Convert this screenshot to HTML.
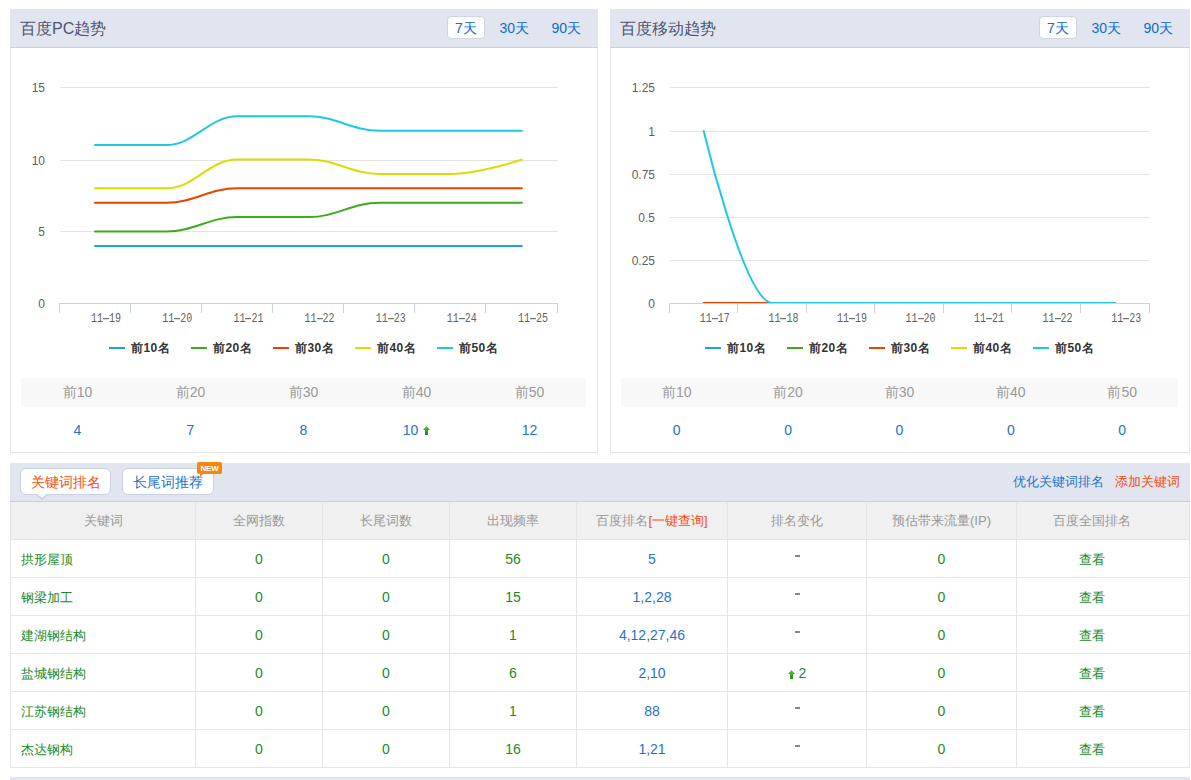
<!DOCTYPE html>
<html><head><meta charset="utf-8">
<style>
*{margin:0;padding:0;box-sizing:border-box}
html,body{width:1191px;height:780px;overflow:hidden;background:#fff}
body{position:relative;font-family:"Liberation Sans",sans-serif;color:#333}
.panel{position:absolute;top:9px;height:444px;border:1px solid #e5e5e5;background:#fff}
.ph{position:absolute;left:-1px;right:-1px;top:-1px;height:39px;background:#e1e5ef;border-bottom:1px solid #c9d1e1}
.pt{position:absolute;left:10px;top:10px;font-size:16px;color:#4b5570;line-height:20px}
.tabs{position:absolute;top:7px;right:0;width:160px;height:23px;font-size:14px}
.tabs span{position:absolute;top:0;height:23px;line-height:24px;color:#0b6dd0;white-space:nowrap}
.tabs span.on{background:#fff;border:1px solid #cdd5e3;border-radius:4px;width:38px;text-align:center;line-height:22px}
svg.ch{position:absolute;left:0;top:0}
.yl{position:absolute;width:40px;text-align:right;font-size:12px;line-height:16px;color:#606060}
.xl{position:absolute;width:50px;text-align:center;font-family:"Liberation Mono",monospace;font-size:10px;line-height:12px;color:#606060;transform:scaleY(1.2);transform-origin:0 0}
.xl i{display:inline-block;width:6px;height:1px;background:#707070;vertical-align:middle;position:relative;top:0px}
.lg{position:absolute;top:339px;height:18px;line-height:18px;font-size:12px;font-weight:bold;color:#333;white-space:nowrap}
.lg i{display:inline-block;width:16px;height:2px;vertical-align:middle;margin-right:6px;position:relative;top:-1px}
.lg b{letter-spacing:0.4px}
.band{position:absolute;top:378px;height:29px;background:#f8f8f8;display:flex}
.sh{text-align:center;font-size:14px;line-height:29px;color:#999}
.vals{position:absolute;top:415px;height:30px;display:flex}
.sv{text-align:center;font-size:14px;line-height:30px;color:#1e73c8}
.arr{display:inline-block;vertical-align:middle;margin-left:5px;position:relative;top:-1px}
.bh{position:absolute;left:10px;top:463px;width:1180px;height:39px;background:#e1e5ef;border-bottom:1px solid #c9d1e1}
.btab{position:absolute;top:5px;height:27px;border:1px solid #c9d1e1;border-radius:6px;background:#fff;font-size:14px;line-height:25px;padding-top:1px;text-align:center}
.red{color:#fa4c0f}
.blue{color:#1e73c8}
.links{position:absolute;right:10px;top:9px;font-size:13px;line-height:20px}
.tblbg{position:absolute;left:10px;top:502px;width:1180px;height:38px;background:#f0f0f0}
.th{position:absolute;height:37px;line-height:37px;text-align:center;font-size:13px;color:#999;white-space:nowrap}
.td{position:absolute;height:37px;line-height:37px;padding-top:1px;text-align:center;font-size:13px;color:#1a8a28;white-space:nowrap}
.td.kw{text-align:left;padding-left:10px}
.td.num{font-size:14px}
.td.blue{color:#1e73c8}
.dash{display:inline-block;width:5px;height:2px;background:#888;vertical-align:top;margin-top:14px}
.hl{position:absolute;left:10px;width:1180px;height:1px;background:#e5e5e5}
.vl{position:absolute;top:502px;height:266px;width:1px;background:#e5e5e5}
.tl{position:absolute;left:10px;top:502px;height:266px;width:1px;background:#e5e5e5}
.tr{position:absolute;left:1189px;top:502px;height:266px;width:1px;background:#e5e5e5}
.foot{position:absolute;left:10px;top:777px;width:1180px;height:3px;background:#e1e5ef}
.newb{position:absolute;left:197px;top:462px;width:25px;height:12px;background:#f8850c;border-radius:2px;color:#fff;font-size:8px;font-weight:bold;line-height:13px;letter-spacing:-0.2px;text-align:center}
.newb:after{content:"";position:absolute;left:3px;bottom:-3px;border-left:3px solid #f8850c;border-bottom:3px solid transparent}
.ptr{position:absolute;left:36px;top:495px;width:0;height:0;border-left:6px solid transparent;border-right:6px solid transparent;border-top:5px solid #c9d1e1}
.ptr:after{content:"";position:absolute;left:-5px;top:-6px;border-left:5px solid transparent;border-right:5px solid transparent;border-top:4px solid #f6f7fa}
</style></head><body>
<div class="panel" style="left:10px;width:588px"><div class="ph"><div class="pt">百度PC趋势</div><div class="tabs"><span class="on" style="right:113px">7天</span><span style="right:69px">30天</span><span style="right:17px">90天</span></div></div></div>
<div class="panel" style="left:610px;width:580px"><div class="ph"><div class="pt">百度移动趋势</div><div class="tabs"><span class="on" style="right:113px">7天</span><span style="right:69px">30天</span><span style="right:17px">90天</span></div></div></div>
<svg class="ch" width="1191" height="780" viewBox="0 0 1191 780">
<rect x="60" y="87" width="498" height="1" fill="#e3e3e3"/>
<rect x="60" y="160" width="498" height="1" fill="#e3e3e3"/>
<rect x="60" y="231" width="498" height="1" fill="#e3e3e3"/>
<path d="M94.97 245.90 C94.97 245.90 137.67 245.90 166.12 245.90 C194.58 245.90 208.81 245.90 237.27 245.90 C265.73 245.90 279.96 245.90 308.42 245.90 C336.88 245.90 351.11 245.90 379.57 245.90 C408.03 245.90 422.26 245.90 450.72 245.90 C479.18 245.90 521.87 245.90 521.87 245.90" fill="none" stroke="#21a1db" stroke-width="2" stroke-linejoin="round" stroke-linecap="round"/>
<path d="M94.97 231.50 C94.97 231.50 137.67 231.50 166.12 231.50 C194.58 231.50 208.81 217.10 237.27 217.10 C265.73 217.10 279.96 217.10 308.42 217.10 C336.88 217.10 351.11 202.70 379.57 202.70 C408.03 202.70 422.26 202.70 450.72 202.70 C479.18 202.70 521.87 202.70 521.87 202.70" fill="none" stroke="#3caa1b" stroke-width="2" stroke-linejoin="round" stroke-linecap="round"/>
<path d="M94.97 202.70 C94.97 202.70 137.67 202.70 166.12 202.70 C194.58 202.70 208.81 188.30 237.27 188.30 C265.73 188.30 279.96 188.30 308.42 188.30 C336.88 188.30 351.11 188.30 379.57 188.30 C408.03 188.30 422.26 188.30 450.72 188.30 C479.18 188.30 521.87 188.30 521.87 188.30" fill="none" stroke="#e84300" stroke-width="2" stroke-linejoin="round" stroke-linecap="round"/>
<path d="M94.97 188.30 C94.97 188.30 137.67 188.30 166.12 188.30 C194.58 188.30 208.81 159.50 237.27 159.50 C265.73 159.50 279.96 159.50 308.42 159.50 C336.88 159.50 351.11 173.90 379.57 173.90 C408.03 173.90 422.26 173.90 450.72 173.90 C479.18 173.90 521.87 159.50 521.87 159.50" fill="none" stroke="#dcdc00" stroke-width="2" stroke-linejoin="round" stroke-linecap="round"/>
<path d="M94.97 145.10 C94.97 145.10 137.67 145.10 166.12 145.10 C194.58 145.10 208.81 116.30 237.27 116.30 C265.73 116.30 279.96 116.30 308.42 116.30 C336.88 116.30 351.11 130.70 379.57 130.70 C408.03 130.70 422.26 130.70 450.72 130.70 C479.18 130.70 521.87 130.70 521.87 130.70" fill="none" stroke="#1ec8e4" stroke-width="2" stroke-linejoin="round" stroke-linecap="round"/>
<rect x="59" y="303" width="499" height="1" fill="#c7d3e8"/>
<rect x="59" y="303" width="1" height="10" fill="#c7d3e8"/>
<rect x="130" y="303" width="1" height="10" fill="#c7d3e8"/>
<rect x="201" y="303" width="1" height="10" fill="#c7d3e8"/>
<rect x="272" y="303" width="1" height="10" fill="#c7d3e8"/>
<rect x="343" y="303" width="1" height="10" fill="#c7d3e8"/>
<rect x="414" y="303" width="1" height="10" fill="#c7d3e8"/>
<rect x="485" y="303" width="1" height="10" fill="#c7d3e8"/>
<rect x="557" y="303" width="1" height="10" fill="#c7d3e8"/>
<rect x="670" y="87" width="480" height="1" fill="#e3e3e3"/>
<rect x="670" y="131" width="480" height="1" fill="#e3e3e3"/>
<rect x="670" y="174" width="480" height="1" fill="#e3e3e3"/>
<rect x="670" y="217" width="480" height="1" fill="#e3e3e3"/>
<rect x="670" y="260" width="480" height="1" fill="#e3e3e3"/>
<path d="M703.69 303.00 C703.69 303.00 744.83 303.00 772.26 303.00 C799.69 303.00 813.40 303.00 840.83 303.00 C868.26 303.00 881.97 303.00 909.40 303.00 C936.83 303.00 950.54 303.00 977.97 303.00 C1005.40 303.00 1019.11 303.00 1046.54 303.00 C1073.97 303.00 1115.11 303.00 1115.11 303.00" fill="none" stroke="#21a1db" stroke-width="2" stroke-linejoin="round" stroke-linecap="round"/>
<path d="M703.69 303.00 C703.69 303.00 744.83 303.00 772.26 303.00 C799.69 303.00 813.40 303.00 840.83 303.00 C868.26 303.00 881.97 303.00 909.40 303.00 C936.83 303.00 950.54 303.00 977.97 303.00 C1005.40 303.00 1019.11 303.00 1046.54 303.00 C1073.97 303.00 1115.11 303.00 1115.11 303.00" fill="none" stroke="#3caa1b" stroke-width="2" stroke-linejoin="round" stroke-linecap="round"/>
<path d="M703.69 303.00 C703.69 303.00 744.83 303.00 772.26 303.00 C799.69 303.00 813.40 303.00 840.83 303.00 C868.26 303.00 881.97 303.00 909.40 303.00 C936.83 303.00 950.54 303.00 977.97 303.00 C1005.40 303.00 1019.11 303.00 1046.54 303.00 C1073.97 303.00 1115.11 303.00 1115.11 303.00" fill="none" stroke="#e84300" stroke-width="2" stroke-linejoin="round" stroke-linecap="round"/>
<path d="M703.69 131.00 C703.69 131.00 744.83 303.00 772.26 303.00 C799.69 303.00 813.40 303.00 840.83 303.00 C868.26 303.00 881.97 303.00 909.40 303.00 C936.83 303.00 950.54 303.00 977.97 303.00 C1005.40 303.00 1019.11 303.00 1046.54 303.00 C1073.97 303.00 1115.11 303.00 1115.11 303.00" fill="none" stroke="#1ec8e4" stroke-width="2" stroke-linejoin="round" stroke-linecap="round"/>
<rect x="669" y="303" width="481" height="1" fill="#c7d3e8"/>
<rect x="669" y="303" width="1" height="10" fill="#c7d3e8"/>
<rect x="737" y="303" width="1" height="10" fill="#c7d3e8"/>
<rect x="806" y="303" width="1" height="10" fill="#c7d3e8"/>
<rect x="874" y="303" width="1" height="10" fill="#c7d3e8"/>
<rect x="943" y="303" width="1" height="10" fill="#c7d3e8"/>
<rect x="1011" y="303" width="1" height="10" fill="#c7d3e8"/>
<rect x="1080" y="303" width="1" height="10" fill="#c7d3e8"/>
<rect x="1149" y="303" width="1" height="10" fill="#c7d3e8"/>
</svg>
<div class="yl" style="left:5px;top:80px">15</div>
<div class="yl" style="left:5px;top:153px">10</div>
<div class="yl" style="left:5px;top:224px">5</div>
<div class="yl" style="left:5px;top:296px">0</div>
<div class="yl" style="left:615px;top:80px">1.25</div>
<div class="yl" style="left:615px;top:124px">1</div>
<div class="yl" style="left:615px;top:167px">0.75</div>
<div class="yl" style="left:615px;top:210px">0.5</div>
<div class="yl" style="left:615px;top:253px">0.25</div>
<div class="yl" style="left:615px;top:296px">0</div>
<div class="xl" style="left:81.1px;top:312px">11<i></i>19</div>
<div class="xl" style="left:152.2px;top:312px">11<i></i>20</div>
<div class="xl" style="left:223.4px;top:312px">11<i></i>21</div>
<div class="xl" style="left:294.5px;top:312px">11<i></i>22</div>
<div class="xl" style="left:365.7px;top:312px">11<i></i>23</div>
<div class="xl" style="left:436.8px;top:312px">11<i></i>24</div>
<div class="xl" style="left:508.0px;top:312px">11<i></i>25</div>
<div class="xl" style="left:689.8px;top:312px">11<i></i>17</div>
<div class="xl" style="left:758.4px;top:312px">11<i></i>18</div>
<div class="xl" style="left:826.9px;top:312px">11<i></i>19</div>
<div class="xl" style="left:895.5px;top:312px">11<i></i>20</div>
<div class="xl" style="left:964.1px;top:312px">11<i></i>21</div>
<div class="xl" style="left:1032.6px;top:312px">11<i></i>22</div>
<div class="xl" style="left:1101.2px;top:312px">11<i></i>23</div>
<div class="lg" style="left:109px"><i style="background:#21a1db"></i><b>前10名</b></div>
<div class="lg" style="left:191px"><i style="background:#3caa1b"></i><b>前20名</b></div>
<div class="lg" style="left:273px"><i style="background:#e84300"></i><b>前30名</b></div>
<div class="lg" style="left:355px"><i style="background:#dcdc00"></i><b>前40名</b></div>
<div class="lg" style="left:437px"><i style="background:#1ec8e4"></i><b>前50名</b></div>
<div class="lg" style="left:705px"><i style="background:#21a1db"></i><b>前10名</b></div>
<div class="lg" style="left:787px"><i style="background:#3caa1b"></i><b>前20名</b></div>
<div class="lg" style="left:869px"><i style="background:#e84300"></i><b>前30名</b></div>
<div class="lg" style="left:951px"><i style="background:#dcdc00"></i><b>前40名</b></div>
<div class="lg" style="left:1033px"><i style="background:#1ec8e4"></i><b>前50名</b></div>
<div class="band" style="left:21px;width:565px"><div class="sh" style="width:113.00px">前10</div><div class="sh" style="width:113.00px">前20</div><div class="sh" style="width:113.00px">前30</div><div class="sh" style="width:113.00px">前40</div><div class="sh" style="width:113.00px">前50</div></div><div class="vals" style="left:21px;width:565px"><div class="sv" style="width:113.00px">4</div><div class="sv" style="width:113.00px">7</div><div class="sv" style="width:113.00px">8</div><div class="sv" style="width:113.00px">10<svg class="arr" width="7" height="9" viewBox="0 0 7 9"><defs><linearGradient id="ag" x1="0" y1="0" x2="0" y2="1"><stop offset="0" stop-color="#5cc23a"/><stop offset="1" stop-color="#1e8a10"/></linearGradient></defs><path d="M3.5 0 L7 4 L5 4 L5 9 L2 9 L2 4 L0 4 Z" fill="url(#ag)"/></svg></div><div class="sv" style="width:113.00px">12</div></div>
<div class="band" style="left:621px;width:557px"><div class="sh" style="width:111.40px">前10</div><div class="sh" style="width:111.40px">前20</div><div class="sh" style="width:111.40px">前30</div><div class="sh" style="width:111.40px">前40</div><div class="sh" style="width:111.40px">前50</div></div><div class="vals" style="left:621px;width:557px"><div class="sv" style="width:111.40px">0</div><div class="sv" style="width:111.40px">0</div><div class="sv" style="width:111.40px">0</div><div class="sv" style="width:111.40px">0</div><div class="sv" style="width:111.40px">0</div></div>
<div class="bh">
<div class="btab red" style="left:10px;width:91px">关键词排名</div>
<div class="btab blue" style="left:112px;width:92px">长尾词推荐</div>
<div class="links"><span class="blue">优化关键词排名</span>&nbsp;&nbsp;&nbsp;<span class="red">添加关键词</span></div>
</div>
<div class="ptr"></div>
<div class="newb">NEW</div>
<div class="tblbg"></div>
<div class="hl" style="top:539px"></div>
<div class="hl" style="top:577px"></div>
<div class="hl" style="top:615px"></div>
<div class="hl" style="top:653px"></div>
<div class="hl" style="top:691px"></div>
<div class="hl" style="top:729px"></div>
<div class="hl" style="top:767px"></div>
<div class="vl" style="left:195px"></div>
<div class="vl" style="left:322px"></div>
<div class="vl" style="left:449px"></div>
<div class="vl" style="left:576px"></div>
<div class="vl" style="left:727px"></div>
<div class="vl" style="left:866px"></div>
<div class="vl" style="left:1016px"></div>
<div class="tl"></div><div class="tr"></div>
<div class="th" style="left:11px;width:184px;top:502px">关键词</div>
<div class="th" style="left:196px;width:126px;top:502px">全网指数</div>
<div class="th" style="left:323px;width:126px;top:502px">长尾词数</div>
<div class="th" style="left:450px;width:126px;top:502px">出现频率</div>
<div class="th" style="left:577px;width:150px;top:502px">百度排名<span class="red">[一键查询]</span></div>
<div class="th" style="left:728px;width:138px;top:502px">排名变化</div>
<div class="th" style="left:867px;width:149px;top:502px">预估带来流量(IP)</div>
<div class="th" style="left:1017px;width:149px;top:502px">百度全国排名</div>
<div class="td kw" style="left:11px;width:184px;top:540px">拱形屋顶</div>
<div class="td num" style="left:196px;width:126px;top:540px">0</div>
<div class="td num" style="left:323px;width:126px;top:540px">0</div>
<div class="td num" style="left:450px;width:126px;top:540px">56</div>
<div class="td blue num" style="left:577px;width:150px;top:540px">5</div>
<div class="td num" style="left:728px;width:138px;top:540px"><span class="dash"></span></div>
<div class="td num" style="left:867px;width:149px;top:540px">0</div>
<div class="td" style="left:1017px;width:149px;top:540px">查看</div>
<div class="td kw" style="left:11px;width:184px;top:578px">钢梁加工</div>
<div class="td num" style="left:196px;width:126px;top:578px">0</div>
<div class="td num" style="left:323px;width:126px;top:578px">0</div>
<div class="td num" style="left:450px;width:126px;top:578px">15</div>
<div class="td blue num" style="left:577px;width:150px;top:578px">1,2,28</div>
<div class="td num" style="left:728px;width:138px;top:578px"><span class="dash"></span></div>
<div class="td num" style="left:867px;width:149px;top:578px">0</div>
<div class="td" style="left:1017px;width:149px;top:578px">查看</div>
<div class="td kw" style="left:11px;width:184px;top:616px">建湖钢结构</div>
<div class="td num" style="left:196px;width:126px;top:616px">0</div>
<div class="td num" style="left:323px;width:126px;top:616px">0</div>
<div class="td num" style="left:450px;width:126px;top:616px">1</div>
<div class="td blue num" style="left:577px;width:150px;top:616px">4,12,27,46</div>
<div class="td num" style="left:728px;width:138px;top:616px"><span class="dash"></span></div>
<div class="td num" style="left:867px;width:149px;top:616px">0</div>
<div class="td" style="left:1017px;width:149px;top:616px">查看</div>
<div class="td kw" style="left:11px;width:184px;top:654px">盐城钢结构</div>
<div class="td num" style="left:196px;width:126px;top:654px">0</div>
<div class="td num" style="left:323px;width:126px;top:654px">0</div>
<div class="td num" style="left:450px;width:126px;top:654px">6</div>
<div class="td blue num" style="left:577px;width:150px;top:654px">2,10</div>
<div class="td num" style="left:728px;width:138px;top:654px"><svg class="arr" style="margin-left:0;top:0" width="7" height="9" viewBox="0 0 7 9"><defs><linearGradient id="ag" x1="0" y1="0" x2="0" y2="1"><stop offset="0" stop-color="#5cc23a"/><stop offset="1" stop-color="#1e8a10"/></linearGradient></defs><path d="M3.5 0 L7 4 L5 4 L5 9 L2 9 L2 4 L0 4 Z" fill="url(#ag)"/></svg><span style="margin-left:4px">2</span></div>
<div class="td num" style="left:867px;width:149px;top:654px">0</div>
<div class="td" style="left:1017px;width:149px;top:654px">查看</div>
<div class="td kw" style="left:11px;width:184px;top:692px">江苏钢结构</div>
<div class="td num" style="left:196px;width:126px;top:692px">0</div>
<div class="td num" style="left:323px;width:126px;top:692px">0</div>
<div class="td num" style="left:450px;width:126px;top:692px">1</div>
<div class="td blue num" style="left:577px;width:150px;top:692px">88</div>
<div class="td num" style="left:728px;width:138px;top:692px"><span class="dash"></span></div>
<div class="td num" style="left:867px;width:149px;top:692px">0</div>
<div class="td" style="left:1017px;width:149px;top:692px">查看</div>
<div class="td kw" style="left:11px;width:184px;top:730px">杰达钢构</div>
<div class="td num" style="left:196px;width:126px;top:730px">0</div>
<div class="td num" style="left:323px;width:126px;top:730px">0</div>
<div class="td num" style="left:450px;width:126px;top:730px">16</div>
<div class="td blue num" style="left:577px;width:150px;top:730px">1,21</div>
<div class="td num" style="left:728px;width:138px;top:730px"><span class="dash"></span></div>
<div class="td num" style="left:867px;width:149px;top:730px">0</div>
<div class="td" style="left:1017px;width:149px;top:730px">查看</div>
<div class="foot"></div>
</body></html>
